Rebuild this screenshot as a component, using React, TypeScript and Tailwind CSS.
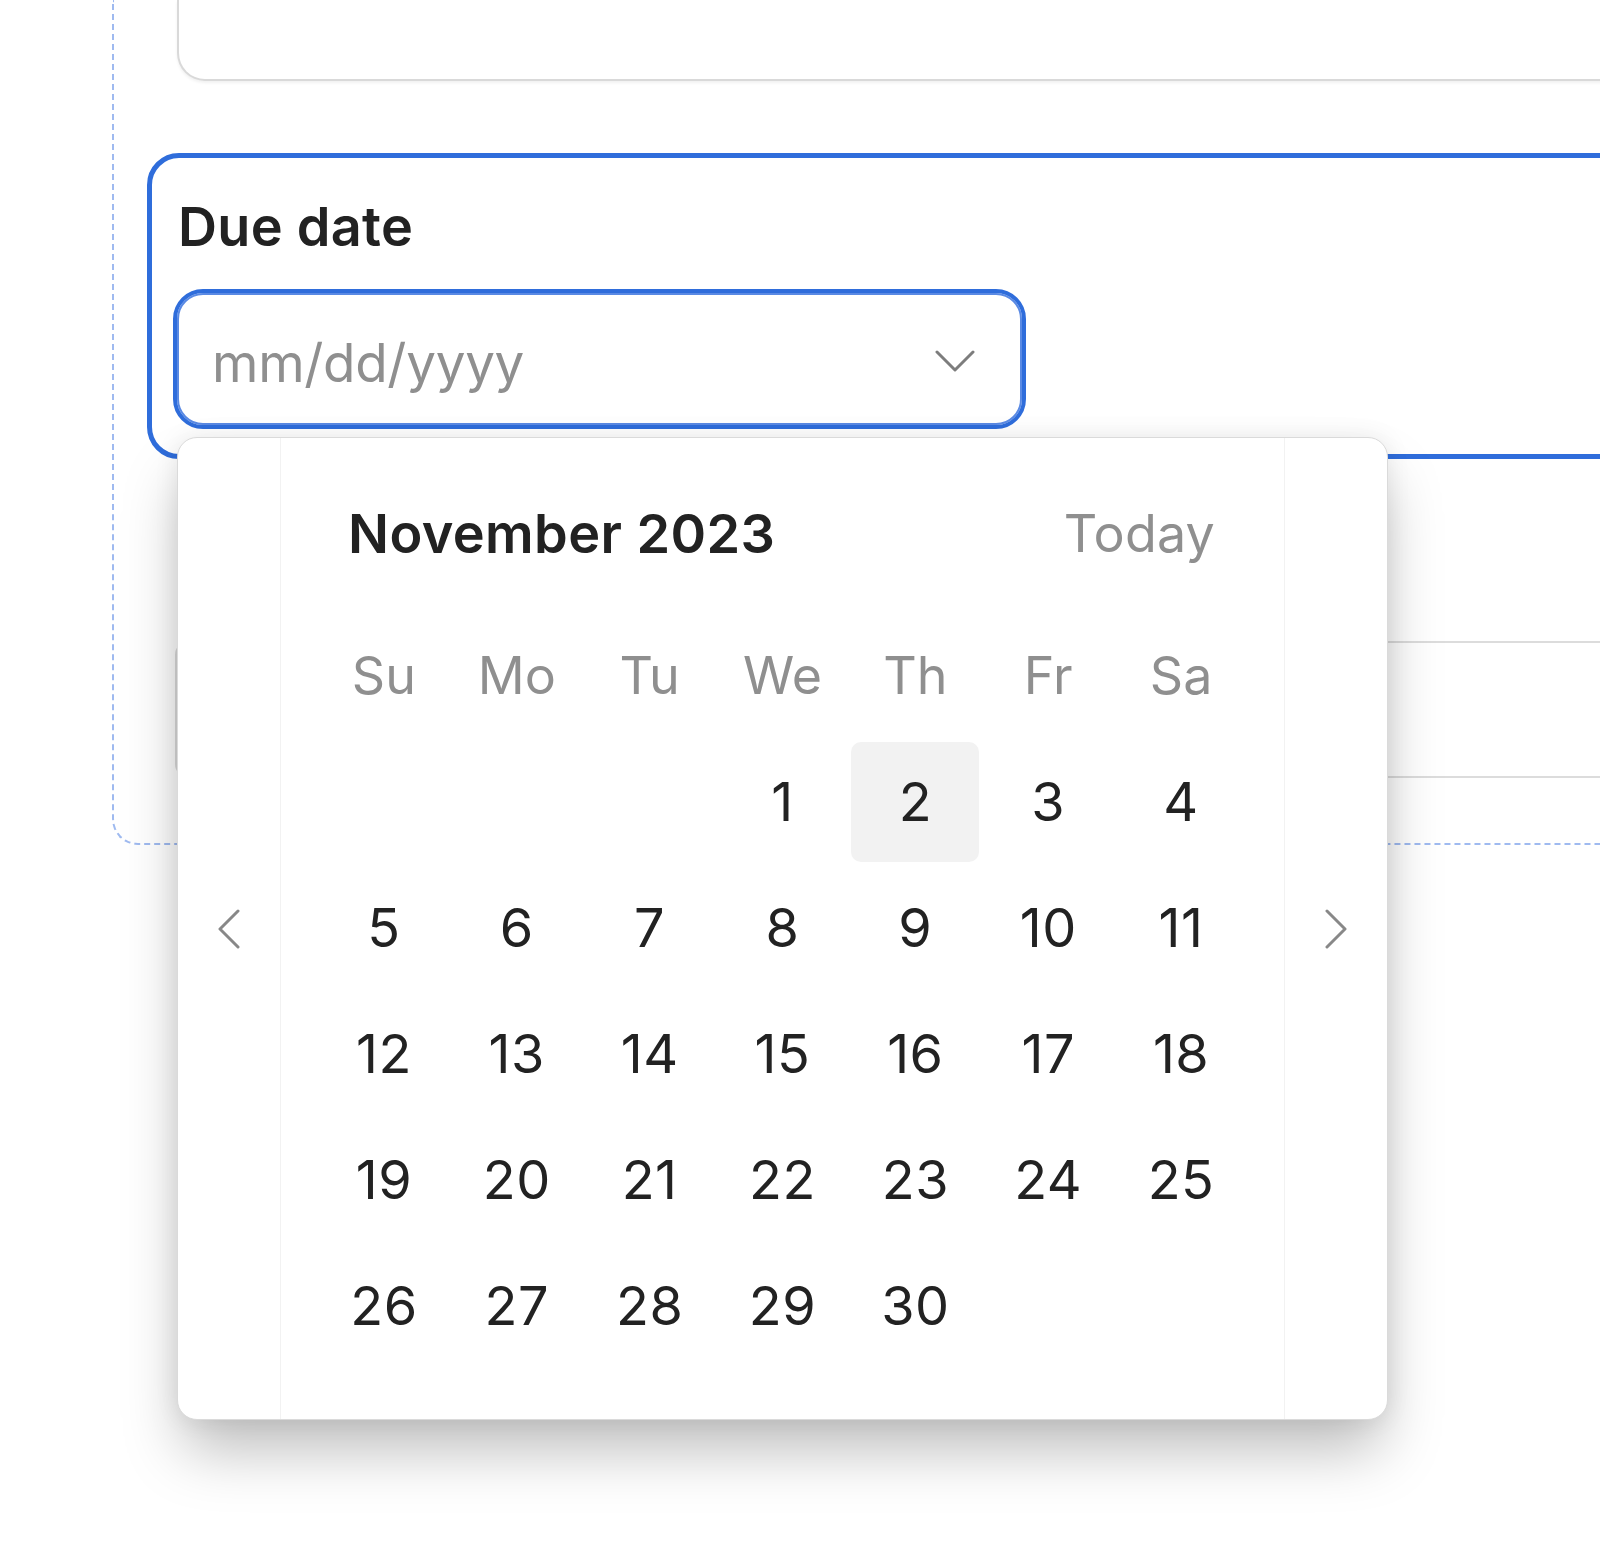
import React from "react";

const days: (number | null)[] = [
  null, null, null, 1, 2, 3, 4,
  5, 6, 7, 8, 9, 10, 11,
  12, 13, 14, 15, 16, 17, 18,
  19, 20, 21, 22, 23, 24, 25,
  26, 27, 28, 29, 30, null, null,
];

const names = ["Su", "Mo", "Tu", "We", "Th", "Fr", "Sa"];

export default function App() {
  return (
    <div
      className="relative w-full h-[1562px] overflow-hidden bg-white text-[#222222]"
      style={{ fontFamily: "Inter, 'Noto Sans', sans-serif" }}
    >
      {/* dashed container */}
      <div className="ml-[112px] -mr-[60px] h-[845px] border-l-2 border-b-2 border-dashed border-[#9fbaf0] rounded-bl-[26px]">
        {/* top card (partially visible) */}
        <div className="ml-[63px] h-[81px] border-x-2 border-b-2 border-[#d9d9d9] rounded-b-[28px] bg-white shadow-[0_2px_3px_rgba(0,0,0,0.06)]" />

        {/* focused field card */}
        <div className="mt-[72px] ml-[33px] h-[306px] border-[5px] border-[#2f6ddb] rounded-[32px] bg-white pt-[43px]">
          <div className="pl-[26px] text-[54px] leading-[52px] font-semibold tracking-[0.3px]">
            Due date
          </div>
          <div className="mt-[40px] ml-[25px] w-[845px] h-[132px] rounded-[26px] border-2 border-[#5a8ae4] outline-4 outline-[#2f6ddb] flex items-center justify-between pl-[33px] pr-[45px]">
            <span className="pt-[8px] text-[53px] leading-[54px] text-[#8f8f8f] tracking-[-0.3px]">
              mm/dd/yyyy
            </span>
            <svg width="40" height="24" viewBox="0 0 40 24" fill="none" className="mt-[4px]">
              <polyline
                points="2,3 20,21 38,3"
                stroke="#7d7d7d"
                strokeWidth="3"
                strokeLinecap="round"
                strokeLinejoin="round"
              />
            </svg>
          </div>
        </div>

        {/* field behind popup */}
        <div className="mt-[182px] ml-[61px] h-[137px] border-2 border-[#dcdcdc] rounded-[14px] bg-white" />
      </div>

      {/* calendar popup */}
      <div className="absolute left-[177px] top-[437px] w-[1211px] h-[983px] rounded-[20px] bg-white border border-[#dadada] shadow-[0_36px_60px_-6px_rgba(0,0,0,0.26),0_0_24px_rgba(0,0,0,0.08)] flex">
        <div className="w-[103px] border-r border-[#f2f2f2] flex items-center justify-center">
          <svg width="26" height="40" viewBox="0 0 26 40" fill="none">
            <polyline
              points="22,2 4,20 22,38"
              stroke="#888888"
              strokeWidth="3"
              strokeLinecap="round"
              strokeLinejoin="round"
            />
          </svg>
        </div>

        <div className="flex-1 pt-[36px] px-[39px]">
          <div className="h-[120px] mb-[22px] flex items-center justify-between pl-[28px] pr-[30px]">
            <span className="text-[54px] leading-[52px] font-semibold tracking-[0.4px]">
              November 2023
            </span>
            <span className="text-[52px] leading-[52px] text-[#8f8f8f] tracking-[0.2px]">
              Today
            </span>
          </div>
          <div className="grid grid-cols-7 gap-x-[5px] gap-y-[6px] auto-rows-[120px]">
            {names.map((n) => (
              <div
                key={n}
                className="flex items-center justify-center text-[52px] leading-[52px] text-[#8f8f8f]"
              >
                {n}
              </div>
            ))}
            {days.map((d, i) => (
              <div
                key={i}
                className={
                  d === 2
                    ? "flex items-center justify-center rounded-[10px] bg-[#f2f2f2] text-[54px] leading-[54px] tracking-[0.5px]"
                    : "flex items-center justify-center text-[54px] leading-[54px] tracking-[0.5px]"
                }
              >
                {d ?? ""}
              </div>
            ))}
          </div>
        </div>

        <div className="w-[103px] border-l border-[#f2f2f2] flex items-center justify-center">
          <svg width="26" height="40" viewBox="0 0 26 40" fill="none">
            <polyline
              points="4,2 22,20 4,38"
              stroke="#888888"
              strokeWidth="3"
              strokeLinecap="round"
              strokeLinejoin="round"
            />
          </svg>
        </div>
      </div>
    </div>
  );
}
